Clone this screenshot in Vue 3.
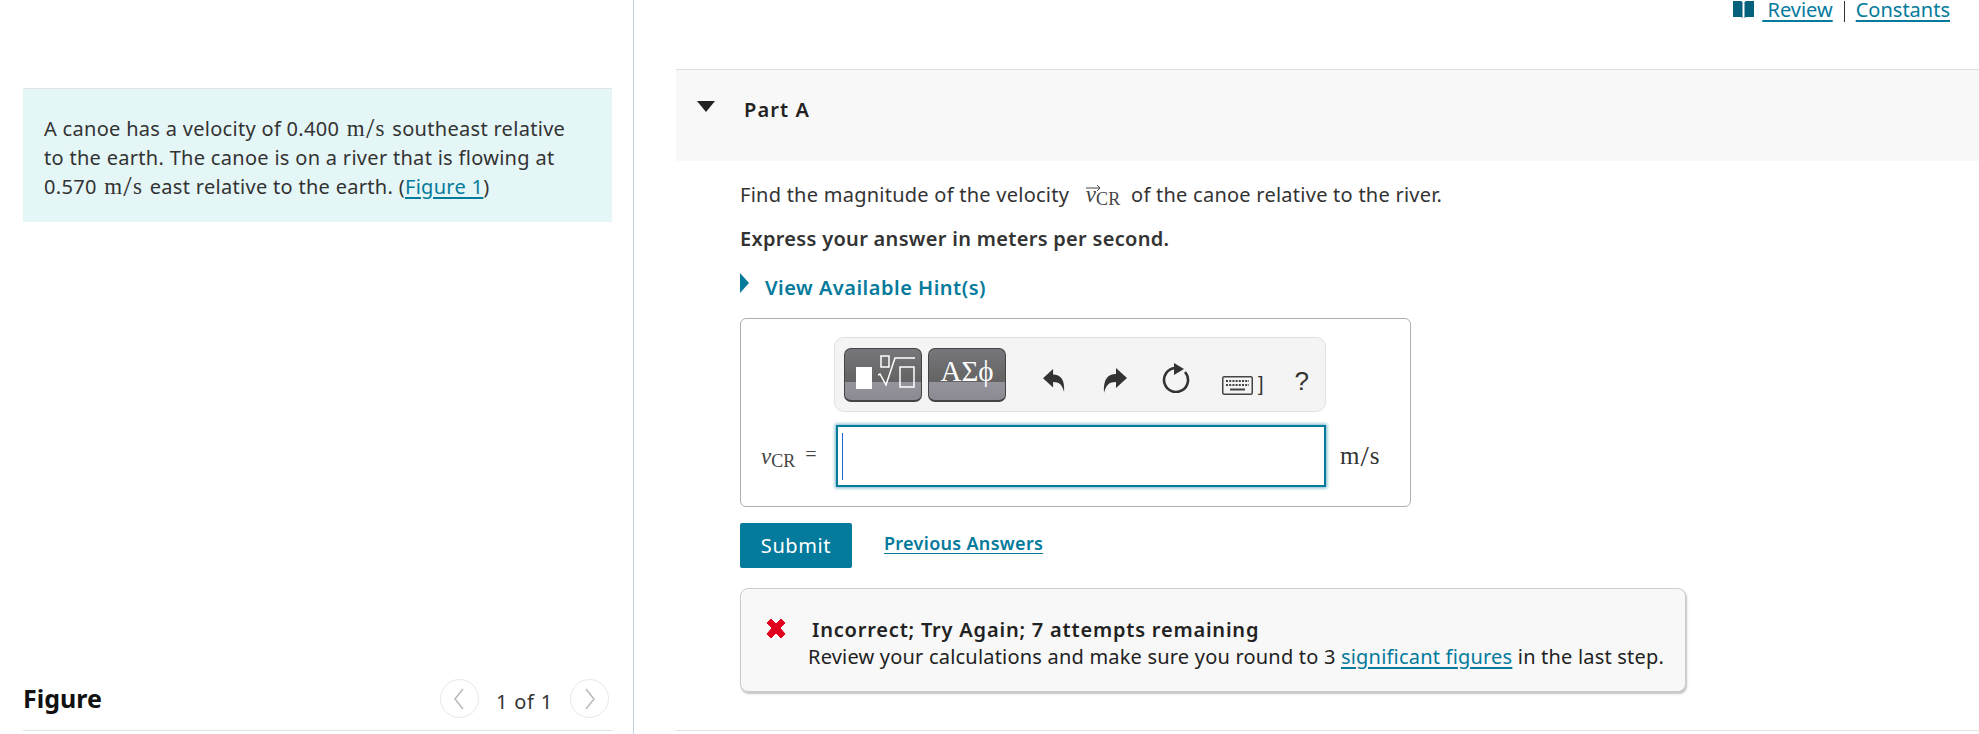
<script setup>
const title = 'Part A'
</script>

<template>
  <div class="page">
    <aside class="left">
      <div class="intro">
        A canoe has a velocity of 0.400 <span class="math">m<span class="sl">/</span>s</span> southeast relative<br />
        to the earth. The canoe is on a river that is flowing at<br />
        0.570 <span class="math">m<span class="sl">/</span>s</span> east relative to the earth. (<a class="link">Figure 1</a>)
      </div>
      <div class="figure-bar">
        <strong class="fig-title">Figure</strong>
        <div class="pager">
          <span class="circle">
            <svg width="12" height="22" viewBox="0 0 12 22"><path d="M10 1 2 11l8 10" fill="none" stroke="#bbb" stroke-width="1.6" /></svg>
          </span>
          <span class="count">1 of 1</span>
          <span class="circle">
            <svg width="12" height="22" viewBox="0 0 12 22"><path d="M2 1l8 10-8 10" fill="none" stroke="#bbb" stroke-width="1.6" /></svg>
          </span>
        </div>
      </div>
    </aside>

    <main class="right">
      <div class="toplinks">
        <svg class="book" width="21" height="17" viewBox="0 0 21 17"><path d="M0 0h8l1.500 1v16L8 16H0zM21 0h-8l-1.500 1v16l1.500-1h8z" fill="#05617c" /></svg>
        <a class="link pre">&nbsp;Review</a>
        <span class="pipe"></span>
        <a class="link">Constants</a>
      </div>

      <header class="part">
        <svg class="tri" width="18" height="11" viewBox="0 0 18 11"><path d="M0 0h18L9 11z" fill="#222" /></svg>
        <h2>{{ title }}</h2>
      </header>

      <section class="body">
        <p class="q">
          Find the magnitude of the velocity
          <span class="math vec"><i>v</i><svg class="arrow" width="15" height="8" viewBox="0 0 15 8"><path d="M0 4h14M11 1l3 3-3 3" fill="none" stroke="#444" stroke-width="1" /></svg><sub>CR</sub></span>
          of the canoe relative to the river.
        </p>
        <p class="express">Express your answer in meters per second.</p>
        <p class="hint">
          <svg width="9" height="20" viewBox="0 0 9 20"><path d="M0 0l9 10-9 10z" fill="#047a9c" /></svg>
          <a>View Available Hint(s)</a>
        </p>

        <div class="answer">
          <div class="toolbar">
            <div class="tpl tplmath">
              <span class="solid"></span>
              <svg width="38" height="34" viewBox="0 0 38 34">
                <path d="M3 1h8v11H3zM22 12h14v20H22z" fill="none" stroke="#fff" stroke-width="1.5" />
                <path d="M0 20l2-1 6 11 9-27h20" fill="none" stroke="#fff" stroke-width="1.5" />
              </svg>
            </div>
            <div class="tpl greek">ΑΣϕ</div>
            <svg class="ic undo" width="22" height="26" viewBox="0 0 24 26"><path d="M0 10 11 0v6c8 0 13 5 12 19-2-8-5-11-12-11v6z" fill="#333" /></svg>
            <svg class="ic redo" width="24" height="26" viewBox="0 0 24 26"><path d="M24 10 13 0v6C5 6 0 11 1 25c2-8 5-11 12-11v6z" fill="#333" /></svg>
            <svg class="ic reset" width="28" height="30" viewBox="0 0 28 30"><path d="M23 9A12 12 0 1 1 13 5" fill="none" stroke="#333" stroke-width="2.600" /><path d="M12 0l10 6-10 6z" fill="#333" /></svg>
            <svg class="ic kbd" width="31" height="19" viewBox="0 0 31 19">
              <rect x=".75" y=".75" width="29.5" height="17.5" rx="1.5" fill="#f4f4f4" stroke="#444" stroke-width="1.5" />
              <path d="M4 5h23M4 9h23" stroke="#444" stroke-width="2" stroke-dasharray="2 1.2" />
              <path d="M8 13.500h15" stroke="#444" stroke-width="2" />
            </svg>
            <span class="brk">]</span>
            <span class="qm">?</span>
          </div>
          <div class="inputrow">
            <span class="label math"><i>v</i><sub>CR</sub><span class="eq">=</span></span>
            <div class="input"><span class="caret"></span></div>
            <span class="unit math">m<span class="sl">/</span>s</span>
          </div>
        </div>

        <div class="actions">
          <button class="submit">Submit</button>
          <a class="prev">Previous Answers</a>
        </div>

        <div class="feedback">
          <svg class="x" width="22" height="21" viewBox="0 0 22 21"><path d="M2 5l4-4 5 5 5-5 4 4-5 5 5 6-4 4-5-5-5 5-4-4 5-6z" fill="#e2001f" stroke="#e2001f" /></svg>
          <div class="fb-text">
            <strong>Incorrect; Try Again; 7 attempts remaining</strong>
            <p>Review your calculations and make sure you round to 3 <a class="link">significant figures</a> in the last step.</p>
          </div>
        </div>
      </section>
    </main>
  </div>
</template>

<style>
html, body { margin: 0; background: #fff; overflow: hidden; }
</style>

<style scoped>
.page {
  display: flex;
  width: 1979px;
  height: 734px;
  overflow: hidden;
  font-family: "Noto Sans", "Noto Sans CJK KR", sans-serif;
  font-size: 20px;
  color: #333;
}
.left {
  width: 634px;
  box-sizing: border-box;
  border-right: 1px solid #c4d0e2;
  padding: 88px 21px 3px 23px;
  display: flex;
  flex-direction: column;
  justify-content: space-between;
  flex: none;
}
.intro {
  height: 134px;
  box-sizing: border-box;
  border-top: 1px solid #dfe3e6;
  background: #e5f6f7;
  padding: 25px 21px;
  line-height: 29px;
  letter-spacing: 0.3px;
  white-space: nowrap;
}
.intro .math { margin: 0 2px; }
.math { font-family: "Liberation Serif", serif; font-size: 23px; }
.sl { font-size: 30px; font-weight: 300; line-height: 0; vertical-align: -2px; margin: 0 1px; }
.link { color: #047a9c; text-decoration: underline; text-underline-offset: 3px; }
.figure-bar {
  border-bottom: 1px solid #dde1e3;
  height: 52px;
  box-sizing: border-box;
  padding: 0 3px 12px 0;
  display: flex;
  align-items: center;
  justify-content: space-between;
}
.fig-title { font-size: 25px; color: #111; letter-spacing: 0; font-weight: 700; margin-top: -2px; }
.pager { display: flex; align-items: center; gap: 17px; }
.count { font-size: 20px; letter-spacing: 0.8px; position: relative; top: 3px; }
.circle {
  width: 39px;
  height: 39px;
  box-sizing: border-box;
  border: 1px solid #e8e8e8;
  border-radius: 50%;
  display: flex;
  align-items: center;
  justify-content: center;
}
.right { flex: 1; min-width: 0; padding-left: 42px; box-sizing: border-box; display: flex; flex-direction: column; }
.toplinks {
  height: 23px;
  margin-bottom: 46px;
  display: flex;
  align-items: flex-start;
  justify-content: flex-end;
  padding-right: 29px;
  line-height: 19px;
}
.toplinks .book { margin: 1px 8px 0 0; }
.pipe { width: 1px; height: 21px; background: #333; margin: 1px 11px 0 11px; }
.pre { white-space: pre; }
.part {
  height: 92px;
  box-sizing: border-box;
  border-top: 1px solid #dedede;
  background: #f8f8f8;
  display: flex;
  align-items: flex-start;
  padding: 30px 0 0 21px;
  flex: none;
}
.tri { margin-top: 1px; }
.part h2 { margin: -5px 0 0 29px; font-size: 20px; letter-spacing: 1.1px; font-weight: 600; color: #222; line-height: 30px; }
.body { padding: 21px 0 0 64px; flex: 1; border-bottom: 1px solid #e2e2e2; margin-bottom: 3px; }
.q, .express, .hint { margin: 0; white-space: nowrap; line-height: 26px; }
.q { letter-spacing: 0.25px; }
.vec { position: relative; margin: 0 5px 0 11px; color: #444; }
.arrow { position: absolute; left: 0; top: 2px; }
sub { font-size: 18px; vertical-align: -3px; line-height: 0; }
.express { font-weight: 600; margin-top: 18px; letter-spacing: 0.3px; color: #333; }
.hint { margin-top: 23px; display: flex; align-items: flex-start; gap: 16px; height: 43px; }
.hint svg { margin-top: -2px; }
.hint a { color: #047a9c; font-weight: 600; letter-spacing: 0.5px; }
.answer {
  width: 671px;
  height: 189px;
  box-sizing: border-box;
  border: 1px solid #b0b0b0;
  border-radius: 6px;
  margin-top: 0;
  padding: 18px 0 0 93px;
}
.toolbar {
  width: 492px;
  height: 75px;
  box-sizing: border-box;
  background: #f4f4f4;
  border: 1px solid #e0e0e0;
  border-radius: 10px;
  display: flex;
  align-items: center;
  padding: 0 0 0 9px;
}
.tpl {
  width: 78px;
  height: 54px;
  box-sizing: border-box;
  border: 1px solid #444;
  border-bottom-width: 2px;
  border-radius: 7px;
  background: linear-gradient(#77767b 0, #636363 65%, #95949c 65%, #8b8a92 100%);
  display: flex;
  align-items: center;
  justify-content: center;
  margin-right: 6px;
  flex: none;
}
.tplmath { justify-content: flex-start; padding-left: 11px; gap: 6px; }
.tplmath svg { margin-bottom: 4px; }
.solid { width: 16px; height: 22px; background: #fff; margin-top: 8px; }
.greek { color: #fff; font-family: "Liberation Serif", serif; font-size: 29px; padding-bottom: 6px; }
.ic { flex: none; }
.undo { margin: 12px 0 0 31px; }
.redo { margin: 12px 0 0 38px; }
.reset { margin: 7px 0 0 35px; }
.kbd { margin: 21px 0 0 32px; }
.brk { font-size: 20px; margin: 20px 0 0 5px; font-family: "Liberation Sans", sans-serif; }
.qm { font-size: 26px; margin: 14px 0 0 31px; color: #333; font-family: "Liberation Sans", sans-serif; }
.inputrow { display: flex; align-items: center; margin: 13px 0 0 -74px; position: relative; }
.label { width: 76px; flex: none; color: #444; margin-top: 2px; white-space: nowrap; margin-left: 1px; margin-right: -1px; }
.eq { margin-left: 10px; font-size: 20px; position: relative; top: -3px; }
.input {
  width: 490px;
  height: 62px;
  box-sizing: border-box;
  border: 2px solid #047a9c;
  box-shadow: 0 0 3px 1px rgba(4, 122, 156, .55);
  background: #fff;
  padding: 6px 4px;
  flex: none;
}
.caret { display: block; width: 1px; height: 47px; background: #2566d8; }
.unit { margin-left: 14px; color: #333; font-size: 25px; }
.actions { display: flex; align-items: flex-start; margin-top: 16px; height: 65px; }
.submit {
  width: 112px;
  height: 45px;
  border: 0;
  border-radius: 2px;
  background: #047a9c;
  color: #fff;
  font: 20px "Noto Sans", sans-serif;
  letter-spacing: 0.6px;
  padding: 0;
}
.prev {
  margin: 8px 0 0 32px;
  color: #047a9c;
  font-weight: 600;
  text-decoration: underline;
  font-size: 18px;
  letter-spacing: 0.3px;
  text-underline-offset: 3px;
}
.feedback {
  width: 946px;
  height: 104px;
  box-sizing: border-box;
  background: #f8f8f8;
  border: 1px solid #cccccc;
  border-radius: 8px;
  box-shadow: 1px 2px 2px #c4c4c4;
  padding: 28px 0 0 24px;
  display: flex;
  align-items: flex-start;
}
.x { flex: none; margin: 1px 21px 0 0; }
.fb-text { margin-top: -1px; white-space: nowrap; line-height: 27px; color: #222; }
.fb-text strong { margin-left: 4px; display: block; letter-spacing: 0.8px; font-weight: 600; }
.fb-text p { margin: 0; letter-spacing: 0.2px; }
</style>
